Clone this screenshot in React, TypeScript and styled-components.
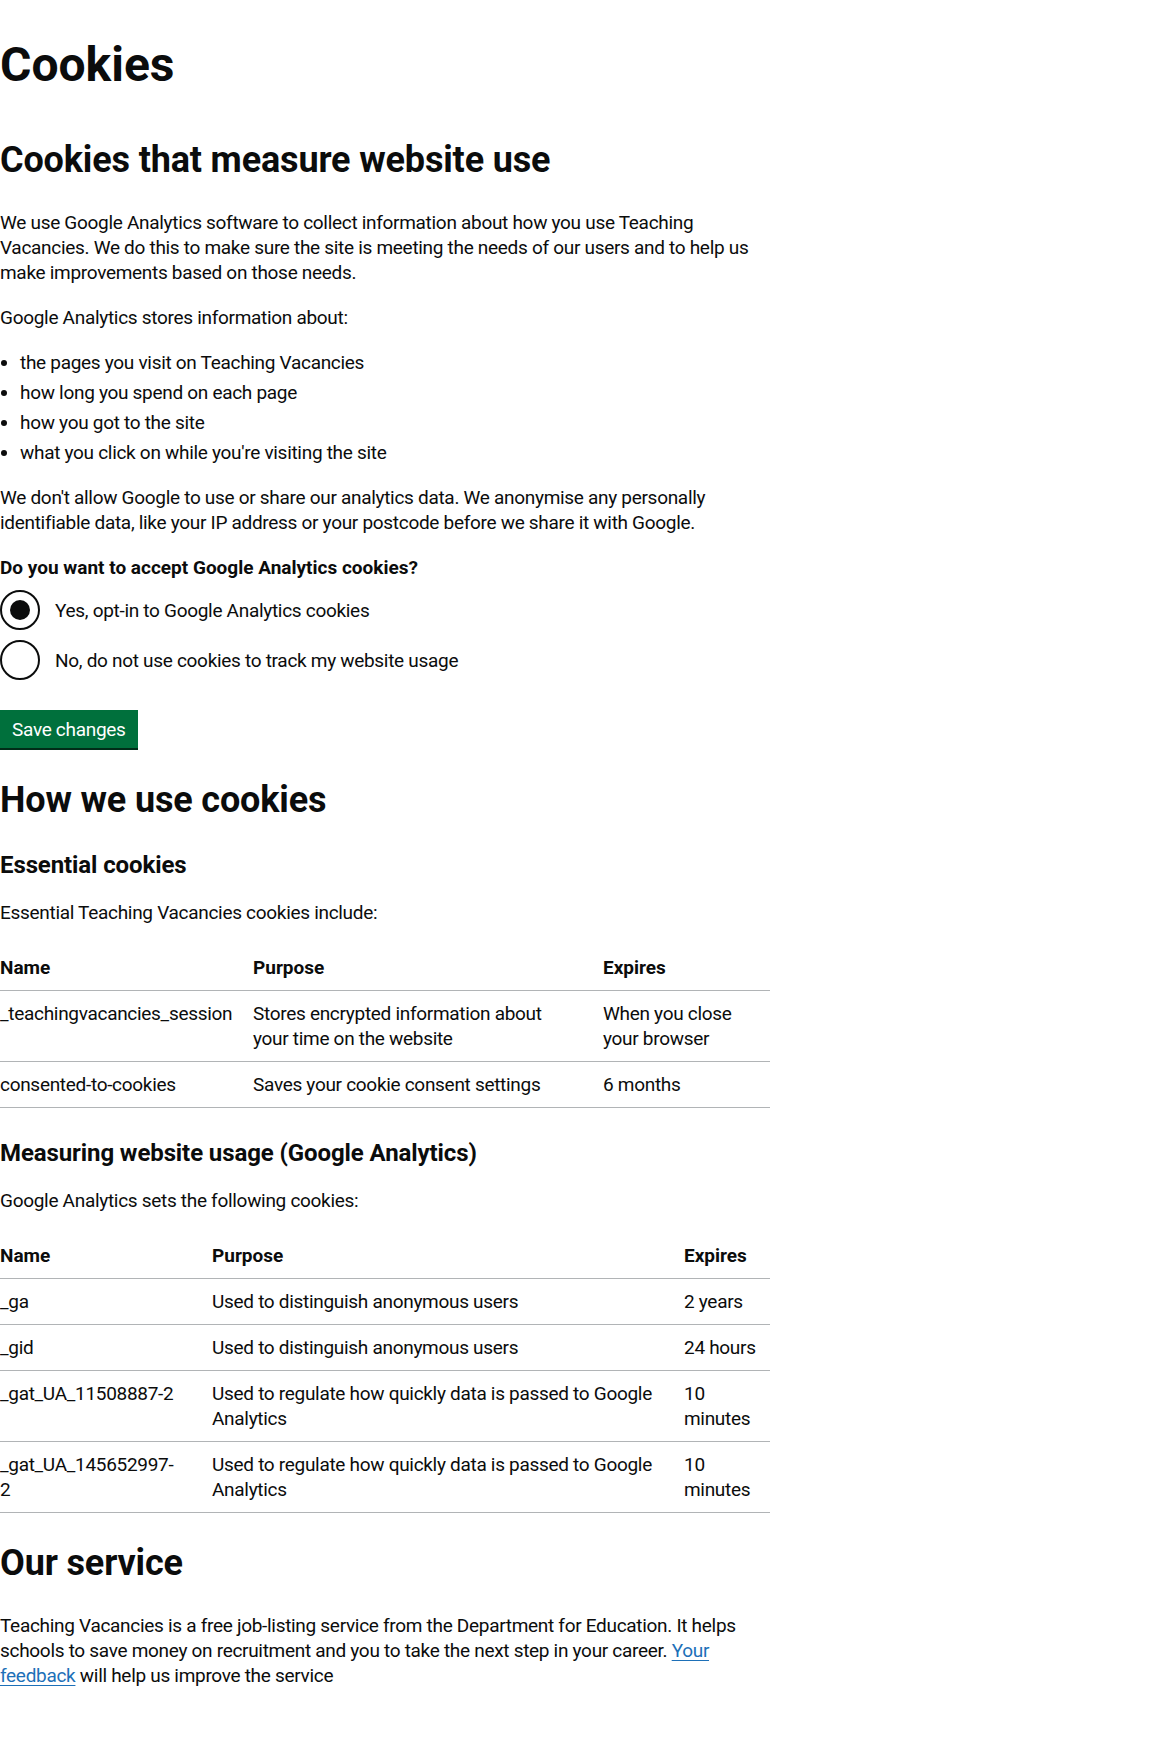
import React from "react";
import styled, { createGlobalStyle } from "styled-components";

const GlobalStyle = createGlobalStyle`
  html, body {
    margin: 0;
    padding: 0;
    background: #ffffff;
  }
  body {
    font-family: Roboto, "Liberation Sans", Arial, sans-serif;
    font-size: 19px;
    line-height: 25px;
    color: #0b0c0c;
    letter-spacing: -0.3px;
    -webkit-font-smoothing: antialiased;
  }
  * { box-sizing: border-box; }
`;

const Main = styled.main`
  max-width: 770px;
  padding: 40px 0 60px 0;
`;

const H1 = styled.h1`
  font-size: 48px;
  line-height: 50px;
  font-weight: 700;
  letter-spacing: 0;
  margin: 0 0 50px 0;
`;

const H2 = styled.h2`
  font-size: 36px;
  line-height: 40px;
  font-weight: 700;
  letter-spacing: -0.15px;
  margin: 0 0 30px 0;
`;

const H3 = styled.h3`
  font-size: 24px;
  line-height: 30px;
  font-weight: 700;
  letter-spacing: -0.1px;
  margin: 0 0 20px 0;
`;

const P = styled.p`
  margin: 0 0 20px 0;
`;

const List = styled.ul`
  margin: 0 0 20px 0;
  padding-left: 20px;
  list-style-type: disc;
  & > li + li {
    margin-top: 5px;
  }
`;

const Fieldset = styled.fieldset`
  border: 0;
  margin: 0 0 30px 0;
  padding: 0;
  min-width: 0;
`;

const Legend = styled.legend`
  font-weight: 700;
  letter-spacing: 0;
  padding: 0;
  margin: 0 0 10px 0;
`;

const Radios = styled.div`
  display: flex;
  flex-direction: column;
  gap: 10px;
`;

const RadioItem = styled.label`
  display: flex;
  align-items: center;
  min-height: 40px;
  cursor: pointer;
`;

const RadioCircle = styled.span<{ $checked: boolean }>`
  position: relative;
  flex: 0 0 40px;
  width: 40px;
  height: 40px;
  border: 2px solid #0b0c0c;
  border-radius: 50%;
  background: #ffffff;
  &::after {
    content: "";
    display: ${(p) => (p.$checked ? "block" : "none")};
    position: absolute;
    top: 8px;
    left: 8px;
    width: 20px;
    height: 20px;
    border-radius: 50%;
    background: #0b0c0c;
  }
`;

const RadioLabel = styled.span`
  padding: 1px 15px 0 15px;
`;

const Button = styled.button`
  display: inline-block;
  font-family: inherit;
  font-size: 19px;
  line-height: 19px;
  letter-spacing: -0.3px;
  color: #ffffff;
  background: #00703c;
  border: 2px solid transparent;
  border-radius: 0;
  box-shadow: 0 2px 0 #002d18;
  padding: 8px 10px 7px;
  margin: 0 0 32px 0;
  cursor: pointer;
`;

const Table = styled.table`
  width: 100%;
  border-collapse: collapse;
  border-spacing: 0;
  table-layout: fixed;
  margin: 0 0 30px 0;
`;

const Col = styled.col<{ $w: number }>`
  width: ${(p) => p.$w}px;
`;

const Th = styled.th`
  text-align: left;
  vertical-align: top;
  font-weight: 700;
  letter-spacing: 0;
  padding: 10px 0 10px 0;
  border-bottom: 1px solid #b1b4b6;
`;

const Td = styled.td<{ $pr: number }>`
  text-align: left;
  vertical-align: top;
  padding: 10px ${(p) => p.$pr}px 10px 0;
  border-bottom: 1px solid #b1b4b6;
`;

const Link = styled.a`
  color: #1d70b8;
  text-decoration: underline;
  text-decoration-thickness: 1px;
  text-underline-offset: 0.15em;
`;

type Row = [string, string, string];
type Triple = [number, number, number];

const essential: Row[] = [
  ["_teachingvacancies_session", "Stores encrypted information about your time on the website", "When you close your browser"],
  ["consented-to-cookies", "Saves your cookie consent settings", "6 months"],
];

const analytics: Row[] = [
  ["_ga", "Used to distinguish anonymous users", "2 years"],
  ["_gid", "Used to distinguish anonymous users", "24 hours"],
  ["_gat_UA_11508887-2", "Used to regulate how quickly data is passed to Google Analytics", "10 minutes"],
  ["_gat_UA_145652997-2", "Used to regulate how quickly data is passed to Google Analytics", "10 minutes"],
];

function CookieTable({ rows, widths, pads }: { rows: Row[]; widths: Triple; pads: Triple }) {
  return (
    <Table>
      <colgroup>
        {widths.map((w, i) => (
          <Col key={i} $w={w} />
        ))}
      </colgroup>
      <thead>
        <tr>
          <Th>Name</Th>
          <Th>Purpose</Th>
          <Th>Expires</Th>
        </tr>
      </thead>
      <tbody>
        {rows.map((r) => (
          <tr key={r[0]}>
            {r.map((cell, i) => (
              <Td key={i} $pr={pads[i]}>
                {cell}
              </Td>
            ))}
          </tr>
        ))}
      </tbody>
    </Table>
  );
}

export default function App() {
  const [choice, setChoice] = React.useState<"yes" | "no">("yes");
  return (
    <>
      <GlobalStyle />
      <Main>
        <H1>Cookies</H1>
        <H2>Cookies that measure website use</H2>
        <P>
          We use Google Analytics software to collect information about how you use Teaching Vacancies. We do this to make
          sure the site is meeting the needs of our users and to help us make improvements based on those needs.
        </P>
        <P>Google Analytics stores information about:</P>
        <List>
          <li>the pages you visit on Teaching Vacancies</li>
          <li>how long you spend on each page</li>
          <li>how you got to the site</li>
          <li>what you click on while you're visiting the site</li>
        </List>
        <P>
          We don't allow Google to use or share our analytics data. We anonymise any personally identifiable data, like
          your IP address or your postcode before we share it with Google.
        </P>
        <Fieldset>
          <Legend>Do you want to accept Google Analytics cookies?</Legend>
          <Radios>
            <RadioItem onClick={() => setChoice("yes")}>
              <RadioCircle $checked={choice === "yes"} />
              <RadioLabel>Yes, opt-in to Google Analytics cookies</RadioLabel>
            </RadioItem>
            <RadioItem onClick={() => setChoice("no")}>
              <RadioCircle $checked={choice === "no"} />
              <RadioLabel>No, do not use cookies to track my website usage</RadioLabel>
            </RadioItem>
          </Radios>
        </Fieldset>
        <Button type="button">Save changes</Button>

        <H2>How we use cookies</H2>
        <H3>Essential cookies</H3>
        <P>Essential Teaching Vacancies cookies include:</P>
        <CookieTable rows={essential} widths={[253, 350, 167]} pads={[20, 24, 6]} />

        <H3>Measuring website usage (Google Analytics)</H3>
        <P>Google Analytics sets the following cookies:</P>
        <CookieTable rows={analytics} widths={[212, 472, 86]} pads={[32, 20, 0]} />

        <H2>Our service</H2>
        <P>
          Teaching Vacancies is a free job-listing service from the Department for Education. It helps schools to save
          money on recruitment and you to take the next step in your career. <Link href="#">Your feedback</Link> will
          help us improve the service
        </P>
      </Main>
    </>
  );
}
